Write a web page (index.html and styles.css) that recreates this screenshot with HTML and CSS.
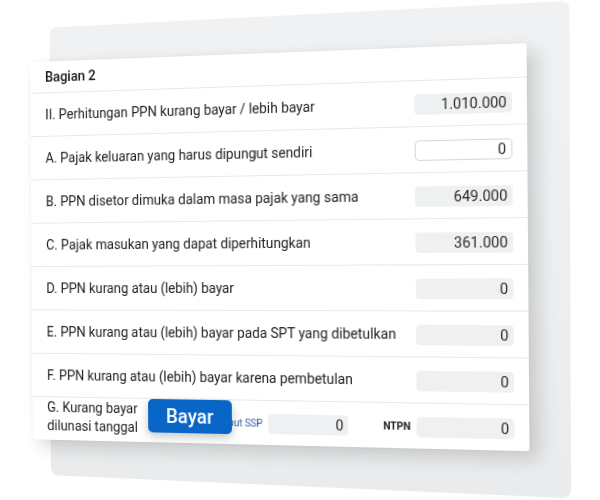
FILE: index.html
```html
<!DOCTYPE html>
<html lang="id">
<head>
<meta charset="utf-8">
<title>Bagian 2</title>
<link rel="stylesheet" href="styles.css">
</head>
<body>
<div class="stage">
  <div class="back"></div>
  <div class="card">
    <div class="head">Bagian 2</div>
    <div class="row"><span class="label">II. Perhitungan PPN kurang bayar / lebih bayar</span><span class="field">1.010.000</span></div>
    <div class="row"><span class="label">A. Pajak keluaran yang harus dipungut sendiri</span><span class="field edit">0</span></div>
    <div class="row"><span class="label">B. PPN disetor dimuka dalam masa pajak yang sama</span><span class="field">649.000</span></div>
    <div class="row"><span class="label">C. Pajak masukan yang dapat diperhitungkan</span><span class="field">361.000</span></div>
    <div class="row"><span class="label">D. PPN kurang atau (lebih) bayar</span><span class="field">0</span></div>
    <div class="row"><span class="label">E. PPN kurang atau (lebih) bayar pada SPT yang dibetulkan</span><span class="field">0</span></div>
    <div class="row"><span class="label">F. PPN kurang atau (lebih) bayar karena pembetulan</span><span class="field">0</span></div>
    <div class="row g-row">
      <span class="label g-label">G. Kurang bayar<br>dilunasi tanggal</span>
      <span class="link">Input SSP</span>
      <span class="field short">0</span>
      <span class="ntpn">NTPN</span>
      <span class="field">0</span>
    </div>
    <button class="bayar">Bayar</button>
  </div>
</div>
</body>
</html>
```

FILE: styles.css
```css
html, body {
  margin: 0;
  padding: 0;
  background: #ffffff;
}

body {
  font-family: Roboto, "Liberation Sans", Arial, sans-serif;
  color: #222;
}

.stage {
  width: 600px;
  height: 500px;
  display: grid;
  overflow: hidden;
}

.back,
.card {
  grid-area: 1 / 1;
  align-self: start;
  justify-self: start;
  box-sizing: border-box;
}

.back {
  margin-left: 32px;
  margin-top: 15px;
  width: 529px;
  height: 471px;
  border-radius: 8px;
  background: linear-gradient(180deg, #eff1f2 0%, #eceeef 60%, #e9ebec 100%);
  box-shadow: 0 0 2px rgba(0, 0, 0, 0.04);
  transform: perspective(1000px) rotateY(-11.5deg) rotateZ(-0.2deg);
}

.card {
  position: relative;
  margin-left: 19px;
  margin-top: 53px;
  width: 502px;
  height: 392px;
  background: #ffffff;
  border-radius: 3px;
  box-shadow: 9px 8px 18px rgba(0, 0, 0, 0.15), 0 0 5px rgba(0, 0, 0, 0.05);
  transform: perspective(1000px) rotateY(-9deg) rotateZ(-0.4deg);
  display: flex;
  flex-direction: column;
}

.head {
  height: 33px;
  flex: 0 0 33px;
  box-sizing: border-box;
  padding: 0 16px;
  display: flex;
  align-items: center;
  font-size: 14px;
  font-weight: 500;
  color: #141414;
  border-bottom: 1px solid #e6e8ea;
}

.row {
  height: 45px;
  flex: 0 0 45px;
  box-sizing: border-box;
  padding: 0 14px 0 16px;
  display: flex;
  align-items: center;
  border-bottom: 1px solid #e6e8ea;
}

.label {
  flex: 1;
  font-size: 13.8px;
  color: #222;
  white-space: nowrap;
}

.field {
  flex: 0 0 93px;
  width: 93px;
  height: 20px;
  box-sizing: border-box;
  border-radius: 4px;
  background: #eef0f1;
  font-size: 14px;
  color: #2b2b2b;
  text-align: right;
  padding-right: 5px;
  line-height: 20px;
  margin-top: 2px;
}

.field.edit {
  background: #ffffff;
  border: 1px solid #d3d7da;
  line-height: 18px;
}

.g-row {
  flex: 1 1 auto;
  border-bottom: none;
  align-items: center;
}

.g-label {
  line-height: 19px;
  margin-top: -4px;
}

.link {
  font-size: 10px;
  color: #2c5fa6;
  margin-right: 6px;
}

.field.short {
  flex: 0 0 80px;
  width: 80px;
}

.ntpn {
  font-size: 10px;
  font-weight: 700;
  color: #1d1d1d;
  margin: 0 6px 0 34px;
}

.bayar {
  position: absolute;
  left: 124px;
  top: 348px;
  width: 87px;
  height: 34px;
  border: none;
  border-radius: 5px;
  background: #0a66c6;
  color: #ffffff;
  font-family: Roboto, "Liberation Sans", Arial, sans-serif;
  font-size: 19.5px;
  font-weight: 500;
  padding: 0;
  box-shadow: 0 4px 10px rgba(0, 0, 0, 0.22);
}
```
